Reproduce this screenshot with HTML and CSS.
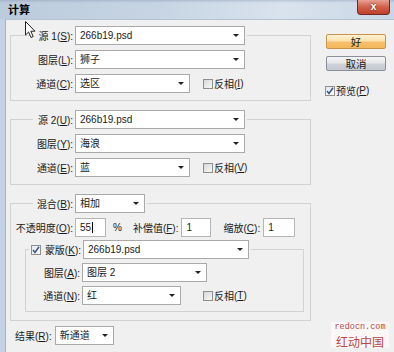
FILE: index.html
```html
<!DOCTYPE html>
<html lang="zh-CN">
<head>
  <meta charset="UTF-8">
  <title>计算</title>
  <link rel="stylesheet" href="styles.css">
</head>
<body>
  <div class="window">
    <div class="titlebar">
      <span class="title">计算</span>
      <span class="close">x</span>
    </div>

    <div class="frame">
      <div class="frame-inner">
        <div class="main">
          <!-- 源 1 -->
          <fieldset class="group">
            <legend>
              <span class="lbl lbl-legend">源 1(<u>S</u>):</span>
              <span class="select w170">266b19.psd</span>
            </legend>
            <div class="row">
              <span class="lbl">图层(<u>L</u>):</span>
              <span class="select w170">狮子</span>
            </div>
            <div class="row">
              <span class="lbl">通道(<u>C</u>):</span>
              <span class="select w115">选区</span>
              <span class="checkline invert"><span class="check"></span>反相(<u>I</u>)</span>
            </div>
          </fieldset>

          <!-- 源 2 -->
          <fieldset class="group">
            <legend>
              <span class="lbl lbl-legend">源 2(<u>U</u>):</span>
              <span class="select w170">266b19.psd</span>
            </legend>
            <div class="row">
              <span class="lbl">图层(<u>Y</u>):</span>
              <span class="select w170">海浪</span>
            </div>
            <div class="row">
              <span class="lbl">通道(<u>E</u>):</span>
              <span class="select w115">蓝</span>
              <span class="checkline invert"><span class="check"></span>反相(<u>V</u>)</span>
            </div>
          </fieldset>

          <!-- 混合 -->
          <fieldset class="group group-blend">
            <legend>
              <span class="lbl lbl-legend">混合(<u>B</u>):</span>
              <span class="select w70">相加</span>
            </legend>
            <div class="row">
              <span class="lbl">不透明度(<u>O</u>):</span>
              <span class="input w31">55<span class="caret"></span></span>
              <span class="pct">%</span>
              <span class="lbl-inline">补偿值(<u>F</u>):</span>
              <span class="input w30">1</span>
              <span class="lbl-inline scale">缩放(<u>C</u>):</span>
              <span class="input w32">1</span>
            </div>

            <fieldset class="group mask">
              <legend>
                <span class="check checked">
                  <svg width="8" height="8" viewBox="0 0 8 8"><path d="M1 4 L3 6.5 L7 0.8" fill="none" stroke="#3a5686" stroke-width="1.5"/></svg>
                </span>
                <span class="lbl lbl-mask">蒙版(<u>K</u>):</span>
                <span class="select w166">266b19.psd</span>
              </legend>
              <div class="row">
                <span class="lbl lbl-inner">图层(<u>A</u>):</span>
                <span class="select w125">图层 2</span>
              </div>
              <div class="row">
                <span class="lbl lbl-inner">通道(<u>N</u>):</span>
                <span class="select w99">红</span>
                <span class="checkline invert-inner"><span class="check"></span>反相(<u>T</u>)</span>
              </div>
            </fieldset>
          </fieldset>

          <div class="row result">
            <span class="lbl-inline">结果(<u>R</u>):</span>
            <span class="select w59">新通道</span>
          </div>
        </div>

        <div class="side">
          <div class="btn btn-ok">好</div>
          <div class="btn btn-cancel">取消</div>
          <div class="checkline preview">
            <span class="check checked">
              <svg width="8" height="8" viewBox="0 0 8 8"><path d="M1 4 L3 6.5 L7 0.8" fill="none" stroke="#3a5686" stroke-width="1.5"/></svg>
            </span>预览(<u>P</u>)
          </div>
        </div>
      </div>
    </div>

    <!-- mouse pointer over the dialog -->
    <svg class="pointer" width="12" height="18" viewBox="0 0 12 18">
      <path d="M0.5 0.5 L0.5 14 L3.6 11 L6 16.5 L8.2 15.5 L5.8 10.2 L10 10.2 Z" fill="#fff" stroke="#222" stroke-width="1"/>
    </svg>

    <div class="watermark">
      <div class="wm-url">redocn.com</div>
      <div class="wm-name">红动中国</div>
    </div>
  </div>
</body>
</html>
```

FILE: styles.css
```css
* {
  box-sizing: border-box;
}

body {
  margin: 0;
  font-family: "Liberation Sans", "Noto Sans CJK SC", sans-serif;
  font-size: 10px;
  color: #1a1a1a;
}

.window {
  position: relative;
  width: 394px;
  height: 352px;
  overflow: hidden;
  background: #f0f0f0;
}

/* title bar */
.titlebar {
  display: flex;
  align-items: center;
  height: 19px;
  padding-left: 8px;
  background:
    linear-gradient(to bottom, rgba(120, 140, 165, 0.35), rgba(255, 255, 255, 0) 3px),
    linear-gradient(100deg, #bccbdc 0%, #c6d4e3 40%, #d9e3ee 72%, #c9d6e5 100%);
}

.title {
  font-family: "Noto Sans CJK SC", sans-serif;
  font-size: 11px;
  font-weight: bold;
  line-height: 19px;
  color: #000;
}

.close {
  align-self: flex-start;
  margin-left: auto;
  margin-right: 4px;
  width: 33px;
  height: 15px;
  border: 1px solid #6e2a22;
  border-top: none;
  border-radius: 0 0 4px 4px;
  background: linear-gradient(to bottom, #e7a192, #d1604b 50%, #c0402c);
  color: #fff;
  font-size: 11px;
  font-weight: bold;
  line-height: 13px;
  text-align: center;
  text-shadow: 0 0 2px #5a1a12;
}

/* window frame */
.frame {
  border-left: 5px solid #c3d3e5;
  height: 333px;
}

.frame-inner {
  display: flex;
  height: 100%;
  border-left: 1px solid #a3b3c5;
  border-top: 1px solid #b4c2d2;
  padding: 6px 0 0 4px;
}

.main {
  width: 301px;
}

/* group boxes */
.group {
  margin: 0;
  padding: 5px 0 7px;
  min-width: 0;
  border: 1px solid #d2d2d2;
}

.group + .group {
  margin-top: 9px;
}

.group legend {
  display: flex;
  align-items: center;
  height: 19px;
  margin-left: 22px;
  padding: 0 2px;
}

.group-blend {
  padding-bottom: 8px;
}

.mask {
  margin: 3px 6px 0 14px;
  padding: 4px 0 6px;
}

.mask legend {
  margin-left: 3px;
}

.row {
  display: flex;
  align-items: center;
  height: 19px;
  white-space: nowrap;
}

.row + .row {
  margin-top: 5px;
}

.mask .row + .row {
  margin-top: 4px;
}

.lbl {
  width: 62px;
  margin-right: 2px;
  text-align: right;
  white-space: nowrap;
}

.lbl-legend {
  width: 38px;
}

.lbl-mask {
  width: 39px;
}

.lbl-inner {
  width: 54px;
}

.lbl-inline {
  margin-right: 3px;
}

u {
  text-decoration: underline;
  text-underline-offset: 1px;
}

/* combo boxes and fields */
.select,
.input {
  position: relative;
  height: 19px;
  padding-left: 4px;
  background: #fff;
  border: 1px solid #a9a9a9;
  line-height: 17px;
  white-space: nowrap;
}

.select::after {
  content: "";
  position: absolute;
  right: 5px;
  top: 7px;
  border-left: 3px solid transparent;
  border-right: 3px solid transparent;
  border-top: 3px solid #222;
}

.input {
  border-color: #b5b5b5;
}

.caret {
  display: inline-block;
  width: 1px;
  height: 11px;
  margin-left: 1px;
  vertical-align: -2px;
  background: #000;
}

.w170 { width: 170px; }
.w166 { width: 166px; }
.w125 { width: 125px; }
.w115 { width: 115px; }
.w99 { width: 99px; }
.w70 { width: 70px; }
.w59 { width: 59px; }
.w32 { width: 32px; }
.w31 { width: 31px; }
.w30 { width: 30px; }

.pct {
  margin: 0 11px 0 7px;
}

.scale {
  margin-left: 12px;
}

/* check boxes */
.checkline {
  display: flex;
  align-items: center;
  white-space: nowrap;
}

.check {
  display: inline-flex;
  align-items: center;
  justify-content: center;
  width: 10px;
  height: 10px;
  margin-right: 1px;
  border: 1px solid #8f8f8f;
  background: linear-gradient(135deg, #d8d8d8, #f8f8f8);
}

.checked {
  background: linear-gradient(135deg, #e4e9f0, #fbfbfb);
}

.invert {
  margin-left: 13px;
}

.invert-inner {
  margin-left: 22px;
}

.result {
  margin-top: 5px;
  padding-left: 5px;
}

/* right column */
.side {
  width: 60px;
  margin-left: 15px;
  padding-top: 8px;
}

.btn {
  display: flex;
  align-items: center;
  justify-content: center;
  height: 15px;
  border-radius: 2px;
  font-family: "Noto Sans CJK SC", sans-serif;
  font-size: 10.5px;
  font-weight: normal;
}

.btn-ok {
  border: 1px solid #c8934c;
  background: linear-gradient(to bottom, #fdf1d6, #fbe2ad 45%, #f6c06c 55%, #f4b85c);
}

.btn-cancel {
  margin-top: 7px;
  border: 1px solid #8a9099;
  background: linear-gradient(to bottom, #f4f4f4, #e6e7ea 45%, #cfd2d8 55%, #c4c8cf);
}

.preview {
  margin-top: 12px;
  margin-left: -1px;
}

/* overlays */
.pointer {
  position: absolute;
  left: 25px;
  top: 21px;
}

.watermark {
  position: absolute;
  right: 5px;
  bottom: 4px;
  display: flex;
  flex-direction: column;
  align-items: center;
  width: 58px;
  height: 26px;
  padding-top: 1px;
  background: #fbf7f7;
  color: #b84848;
}

.wm-url {
  height: 9px;
  font-family: "Liberation Mono", monospace;
  font-size: 8.5px;
  line-height: 9px;
}

.wm-name {
  height: 13px;
  margin-top: 3px;
  font-family: "Noto Sans CJK SC", sans-serif;
  font-size: 12px;
  line-height: 13px;
}
```
